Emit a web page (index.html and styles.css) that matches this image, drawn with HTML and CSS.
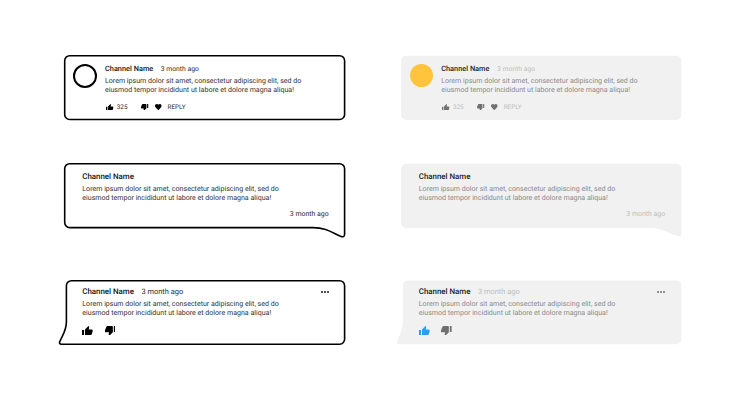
FILE: index.html
```html
<!DOCTYPE html>
<html lang="en">
<head>
<meta charset="utf-8">
<title>Comment bubbles</title>
<link rel="stylesheet" href="styles.css">
</head>
<body>
<svg width="0" height="0" class="defs" aria-hidden="true">
  <symbol id="up" viewBox="1 1 22 20"><path d="M1 21h4V9H1v12zm22-11c0-1.1-.9-2-2-2h-6.31l.95-4.57.03-.32c0-.41-.17-.79-.44-1.06L14.17 1 7.59 7.59C7.22 7.95 7 8.45 7 9v10c0 1.1.9 2 2 2h9c.83 0 1.54-.5 1.84-1.22l3.02-7.05c.09-.23.14-.47.14-.73v-2z"/></symbol>
  <symbol id="down" viewBox="1 3 22 20"><path d="M15 3H6c-.83 0-1.54.5-1.84 1.22l-3.02 7.05c-.09.23-.14.47-.14.73v2c0 1.1.9 2 2 2h6.31l-.95 4.57-.03.32c0 .41.17.79.44 1.06L9.83 23l6.59-6.59c.36-.36.58-.86.58-1.41V5c0-1.1-.9-2-2-2zm4 0v12h4V3h-4z"/></symbol>
  <symbol id="heart" viewBox="2 3 20 18.35"><path d="M12 21.35l-1.45-1.32C5.4 15.36 2 12.28 2 8.5 2 5.42 4.42 3 7.5 3c1.74 0 3.41.81 4.5 2.09C13.09 3.81 14.76 3 16.5 3 19.58 3 22 5.42 22 8.5c0 3.78-3.4 6.86-8.55 11.54L12 21.35z"/></symbol>
  <symbol id="dots" viewBox="0 0 8 2"><circle cx="1" cy="1" r=".9"/><circle cx="4" cy="1" r=".9"/><circle cx="7" cy="1" r=".9"/></symbol>
</svg>
<main class="board">
  <article class="card card-avatar outline">
    <svg class="bubble" viewBox="0 0 282 66"><path d="M5.7 .7H275.6A5 5 0 0 1 280.6 5.7V59.5A5 5 0 0 1 275.6 64.5H5.7A5 5 0 0 1 .7 59.5V5.7A5 5 0 0 1 5.7 .7Z"/></svg>
    <span class="avatar"></span>
    <div class="content">
      <header><h2>Channel Name</h2><time>3 month ago</time></header>
      <p>Lorem ipsum dolor sit amet, consectetur adipiscing elit, sed do<br>eiusmod tempor incididunt ut labore et dolore magna aliqua!</p>
      <footer><svg class="icon"><use href="#up"/></svg><span class="count">325</span><svg class="icon"><use href="#down"/></svg><svg class="icon heart"><use href="#heart"/></svg><span class="reply">REPLY</span></footer>
    </div>
  </article>
  <article class="card card-avatar filled">
    <svg class="bubble" viewBox="0 0 282 66"><path d="M5.2 .7H275.3A5 5 0 0 1 280.3 5.7V60A5 5 0 0 1 275.3 65H5.2A5 5 0 0 1 .2 60V5.7A5 5 0 0 1 5.2 .7Z"/></svg>
    <span class="avatar"></span>
    <div class="content">
      <header><h2>Channel Name</h2><time>3 month ago</time></header>
      <p>Lorem ipsum dolor sit amet, consectetur adipiscing elit, sed do<br>eiusmod tempor incididunt ut labore et dolore magna aliqua!</p>
      <footer><svg class="icon"><use href="#up"/></svg><span class="count">325</span><svg class="icon"><use href="#down"/></svg><svg class="icon heart"><use href="#heart"/></svg><span class="reply">REPLY</span></footer>
    </div>
  </article>
  <article class="card card-message outline">
    <svg class="bubble" viewBox="0 0 282 66"><path d="M5.7 .7H275.6A5 5 0 0 1 280.6 5.7V71Q280.6 75 276.5 73.3C268 69.5 262 64.6 249 64.6H5.7A5 5 0 0 1 .7 59.6V5.7A5 5 0 0 1 5.7 .7Z"/></svg>
    <div class="content">
      <header><h2>Channel Name</h2></header>
      <p>Lorem ipsum dolor sit amet, consectetur adipiscing elit, sed do<br>eiusmod tempor incididunt ut labore et dolore magna aliqua!</p>
      <time class="stamp">3 month ago</time>
    </div>
  </article>
  <article class="card card-message filled">
    <svg class="bubble" viewBox="0 0 282 66"><path d="M5.2 .7H275.3A5 5 0 0 1 280.3 5.7V73.5C270 73 264 65 248 65H5.2A5 5 0 0 1 .2 60V5.7A5 5 0 0 1 5.2 .7Z"/></svg>
    <div class="content">
      <header><h2>Channel Name</h2></header>
      <p>Lorem ipsum dolor sit amet, consectetur adipiscing elit, sed do<br>eiusmod tempor incididunt ut labore et dolore magna aliqua!</p>
      <time class="stamp">3 month ago</time>
    </div>
  </article>
  <article class="card card-rated outline">
    <svg class="bubble" viewBox="0 0 282 66"><path d="M7.4 .7H275.6A5 5 0 0 1 280.6 5.7V59.2A5 5 0 0 1 275.6 64.2H-2.5Q-5.4 64.2 -4 61.2C-1.5 55 2.4 50.5 2.4 42V5.7A5 5 0 0 1 7.4 .7Z"/></svg>
    <div class="content">
      <header><h2>Channel Name</h2><time>3 month ago</time><svg class="more"><use href="#dots"/></svg></header>
      <p>Lorem ipsum dolor sit amet, consectetur adipiscing elit, sed do<br>eiusmod tempor incididunt ut labore et dolore magna aliqua!</p>
      <footer><svg class="icon liked"><use href="#up"/></svg><svg class="icon"><use href="#down"/></svg></footer>
    </div>
  </article>
  <article class="card card-rated filled">
    <svg class="bubble" viewBox="0 0 282 66"><path d="M7 .4H275.3A5 5 0 0 1 280.3 5.4V59.2A5 5 0 0 1 275.3 64.2H-4.3C-2.8 55.5 2 51 2 42V5.4A5 5 0 0 1 7 .4Z"/></svg>
    <div class="content">
      <header><h2>Channel Name</h2><time>3 month ago</time><svg class="more"><use href="#dots"/></svg></header>
      <p>Lorem ipsum dolor sit amet, consectetur adipiscing elit, sed do<br>eiusmod tempor incididunt ut labore et dolore magna aliqua!</p>
      <footer><svg class="icon liked"><use href="#up"/></svg><svg class="icon"><use href="#down"/></svg></footer>
    </div>
  </article>
</main>
</body>
</html>
```
FILE: styles.css
```css
* { box-sizing: border-box; }
body { margin: 0; background: #fff; font-family: Roboto, "Liberation Sans", sans-serif; text-rendering: geometricPrecision; }
.defs { position: absolute; }
.board {
  display: grid;
  grid-template-columns: 282px 282px;
  grid-template-rows: 108px 117px 66px;
  column-gap: 54.5px;
  height: 400px;
  padding: 55px 0 0 64px;
}
.card { position: relative; display: flex; height: 66px; }
.bubble { position: absolute; left: 0; top: 0; width: 282px; height: 66px; overflow: visible; z-index: -1; }
.outline { --title: #111; --text: #333; --time: #2b2b2b; --icon: #000; --like: #000; --dots: #000; }
.filled { --title: #222; --text: #8b8b8b; --time: #bdbdbd; --icon: #707070; --like: #29a0f5; --dots: #666; }
.outline .bubble { fill: #fff; stroke: #000; stroke-width: 1.6; }
.filled .bubble { fill: #f1f1f1; }
.content { flex: 1; display: flex; flex-direction: column; }
header { display: flex; align-items: center; height: 10px; line-height: 10px; }
h2 { margin: 0; font-size: 7.88px; font-weight: 500; color: var(--title); white-space: nowrap; }
time { font-size: 7.45px; color: var(--time); white-space: nowrap; }
p { margin: 2px 0 0; font-size: 7.07px; line-height: 9px; color: var(--text); white-space: nowrap; }
footer { display: flex; align-items: center; height: 10px; }
.icon { fill: var(--icon); flex: none; }
.liked { fill: var(--like); }

.avatar { flex: none; width: 24.5px; height: 24.5px; margin: 8.5px 8px 0 8.5px; border-radius: 50%; }
.outline .avatar { border: 2px solid #000; }
.filled .avatar { width: 23px; height: 23px; margin: 9px 8.5px 0 9.2px; background: #ffc43b; }
.card-avatar .content { padding-top: 9px; }
.card-avatar h2 { font-size: 7.37px; }
.card-avatar time { margin-left: 7.5px; font-size: 6.8px; }
.card-avatar footer { margin-top: 8px; padding-left: 1px; font-size: 6.35px; color: var(--time); }
.card-avatar .icon { width: 7.5px; height: 6.8px; }
.count { width: 24.3px; margin-left: 3.3px; }
.card-avatar .heart { width: 6.7px; height: 6.2px; margin-left: 6.3px; }
.reply { margin-left: 5.9px; }

.card-message .content { padding: 9px 17.3px 0 18.3px; }
.stamp { align-self: flex-end; margin-top: 7px; font-size: 6.95px; line-height: 10px; }

.card-rated .content { padding: 7px 17.5px 0 18.3px; }
.card-rated time { margin-left: 7.5px; }
.more { width: 8px; height: 2px; margin-left: auto; fill: var(--dots); }
.card-rated footer { margin-top: 8.5px; gap: 11.5px; }
.card-rated .icon { width: 10.8px; height: 9.8px; }
```
